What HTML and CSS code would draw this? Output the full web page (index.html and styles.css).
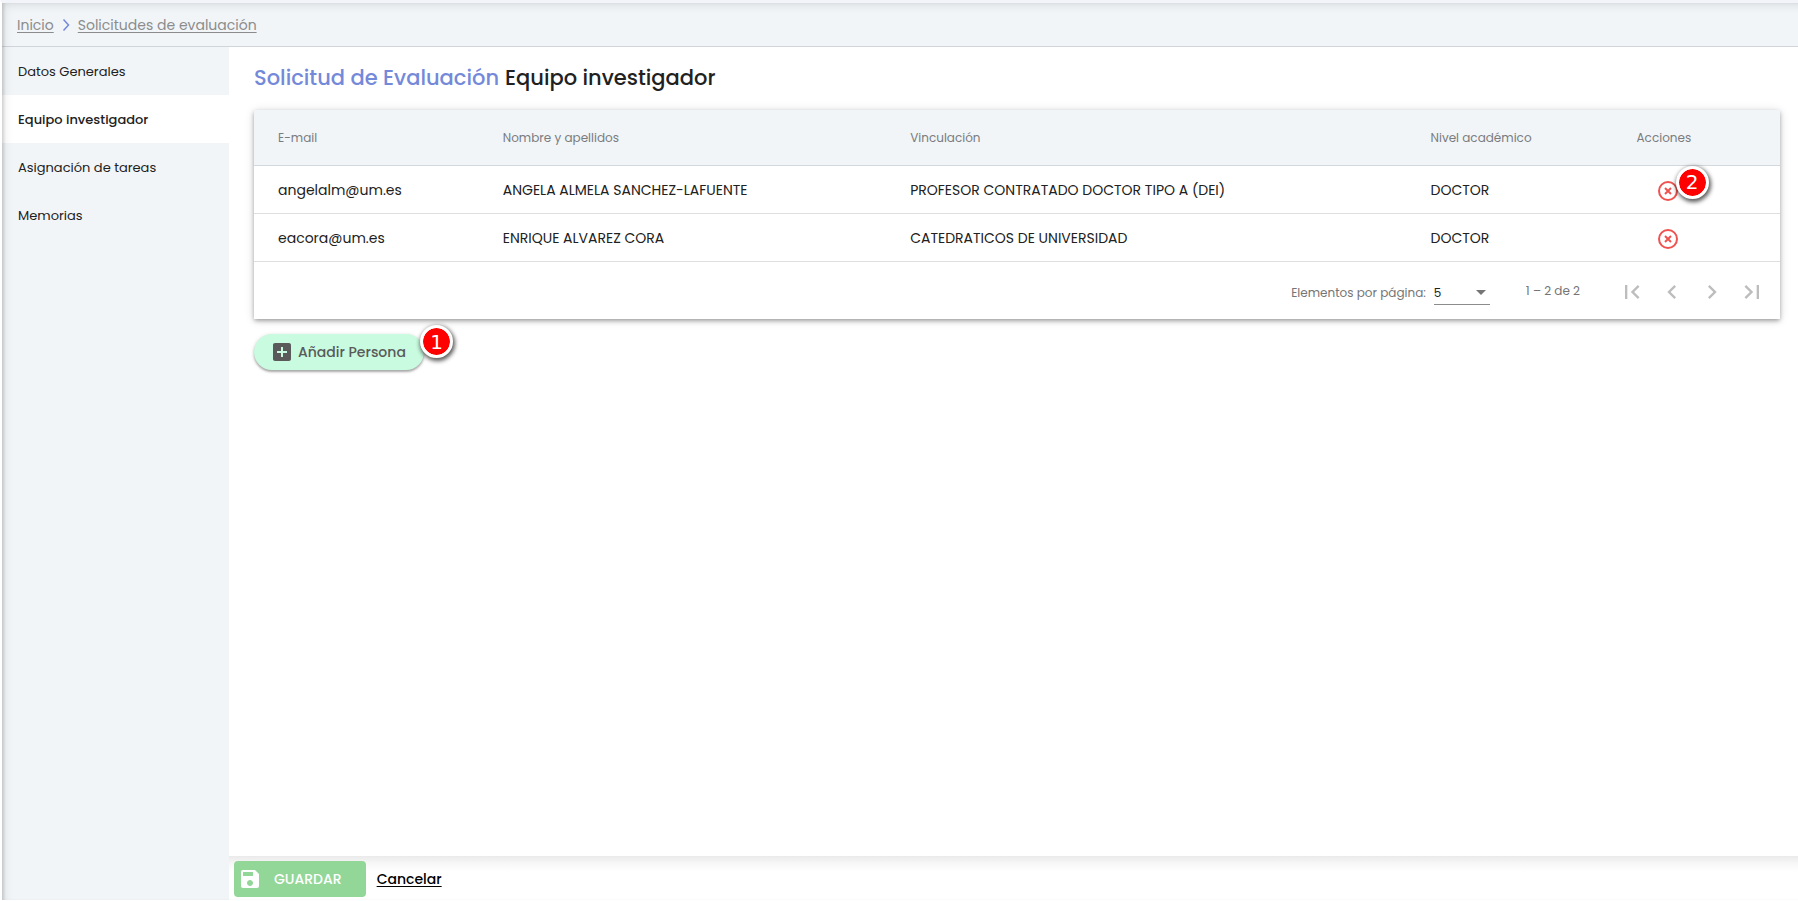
FILE: index.html
```html
<!DOCTYPE html>
<html lang="es">
<head>
<meta charset="utf-8">
<meta name="viewport" content="width=device-width, initial-scale=1">
<title>Solicitud de Evaluación - Equipo investigador</title>
<link rel="stylesheet" href="styles.css">
</head>
<body>
<div class="app">
  <nav class="breadcrumb" aria-label="Ruta">
    <a href="#">Inicio</a>
    <svg class="breadcrumb-sep" viewBox="0 0 8 12" aria-hidden="true"><path d="M1.5 .5L6.5 6l-5 5.500"/></svg>
    <a href="#">Solicitudes de evaluación</a>
  </nav>
  <div class="body">
    <nav class="sidebar" aria-label="Secciones">
      <a href="#">Datos Generales</a>
      <a href="#" class="active" aria-current="page">Equipo investigador</a>
      <a href="#">Asignación de tareas</a>
      <a href="#">Memorias</a>
    </nav>
    <div class="content">
      <main class="main">
        <h1 class="title"><span class="title-section">Solicitud de Evaluación</span> <span>Equipo investigador</span></h1>
        <section class="card">
          <table class="table">
            <colgroup><col class="col-mail"><col class="col-name"><col class="col-link"><col class="col-level"><col></colgroup>
            <thead>
              <tr><th>E-mail</th><th>Nombre y apellidos</th><th>Vinculación</th><th>Nivel académico</th><th>Acciones</th></tr>
            </thead>
            <tbody>
              <tr>
                <td>angelalm@um.es</td><td>ANGELA ALMELA SANCHEZ-LAFUENTE</td><td>PROFESOR CONTRATADO DOCTOR TIPO A (DEI)</td><td>DOCTOR</td>
                <td><div class="anchor"><button class="remove" type="button" aria-label="Eliminar"><svg viewBox="0 0 24 24"><circle cx="12" cy="12" r="9"/><path d="M9 9l6 6M15 9l-6 6"/></svg></button><span class="badge badge-row">2</span></div></td>
              </tr>
              <tr>
                <td>eacora@um.es</td><td>ENRIQUE ALVAREZ CORA</td><td>CATEDRATICOS DE UNIVERSIDAD</td><td>DOCTOR</td>
                <td><div class="anchor"><button class="remove" type="button" aria-label="Eliminar"><svg viewBox="0 0 24 24"><circle cx="12" cy="12" r="9"/><path d="M9 9l6 6M15 9l-6 6"/></svg></button></div></td>
              </tr>
            </tbody>
          </table>
          <div class="paginator">
            <label for="page-size">Elementos por página:</label>
            <span class="select-wrap">
              <select id="page-size"><option>5</option><option>10</option><option>25</option></select>
              <svg viewBox="0 0 10 5" aria-hidden="true"><path d="M0 0h10L5 5z"/></svg>
            </span>
            <span class="range">1 – 2 de 2</span>
            <div class="pages">
              <button type="button" disabled aria-label="Primera página"><svg viewBox="0 0 24 24"><path d="M18.41 16.59L13.82 12l4.59-4.59L17 6l-6 6 6 6zM6 6h2v12H6z"/></svg></button>
              <button type="button" disabled aria-label="Página anterior"><svg viewBox="0 0 24 24"><path d="M15.41 7.41L14 6l-6 6 6 6 1.41-1.41L10.83 12z"/></svg></button>
              <button type="button" disabled aria-label="Página siguiente"><svg viewBox="0 0 24 24"><path d="M10 6L8.59 7.41 13.17 12l-4.58 4.59L10 18l6-6z"/></svg></button>
              <button type="button" disabled aria-label="Última página"><svg viewBox="0 0 24 24"><path d="M5.59 7.41L10.18 12l-4.59 4.59L7 18l6-6-6-6zM16 6h2v12h-2z"/></svg></button>
            </div>
          </div>
        </section>
        <div class="anchor add-row">
          <button class="add" type="button"><svg viewBox="3 3 18 18" aria-hidden="true"><path d="M19 3H5c-1.11 0-2 .9-2 2v14c0 1.1.89 2 2 2h14c1.1 0 2-.9 2-2V5c0-1.1-.9-2-2-2zm-2 10h-4v4h-2v-4H7v-2h4V7h2v4h4v2z"/></svg>Añadir Persona</button>
          <span class="badge badge-add">1</span>
        </div>
      </main>
      <footer class="actions">
        <button class="save" type="button" disabled><svg viewBox="3 3 18 18" aria-hidden="true"><path d="M17 3H5c-1.11 0-2 .9-2 2v14c0 1.1.89 2 2 2h14c1.1 0 2-.9 2-2V7l-4-4zm-5 16c-1.66 0-3-1.34-3-3s1.34-3 3-3 3 1.34 3 3-1.34 3-3 3zm3-10H5V5h10v4z"/></svg>GUARDAR</button>
        <a href="#" class="cancel">Cancelar</a>
      </footer>
    </div>
  </div>
</div>
</body>
</html>
```
FILE: styles.css
```css
* { box-sizing: border-box; }

body {
  margin: 0;
  background: #fff;
  color: #212121;
  font-family: Poppins, Inter, "Noto Sans", sans-serif;
  font-size: 14px;
}

button, select { font: inherit; color: inherit; }

.app {
  position: relative;
  display: flex;
  flex-direction: column;
  min-height: 100vh;
  border-top: 3px solid #f3f4f9;
  border-left: 2px solid #fff;
  border-bottom: 1px solid #fff;
}

.app::after {
  content: "";
  position: absolute;
  inset: 0;
  pointer-events: none;
  box-shadow: inset 3px 0 3px -1px rgba(0, 0, 0, .12), inset 6px 6px 12px -6px rgba(0, 0, 0, .14);
}

.breadcrumb {
  display: flex;
  align-items: center;
  gap: 8px;
  height: 44px;
  padding: 1px 15px 0;
  background: #f1f5f8;
  border-bottom: 1px solid #cfd5da;
  font-size: 14px;
}

.breadcrumb a {
  color: #8c8c8c;
  text-underline-offset: 2px;
}

.breadcrumb-sep {
  width: 8px;
  height: 12px;
  fill: none;
  stroke: #7489d9;
  stroke-width: 1.5;
}

.body {
  display: flex;
  flex: 1;
}

.sidebar {
  flex: 0 0 227px;
  background: #f1f5f8;
}

.sidebar a {
  display: flex;
  align-items: center;
  height: 48px;
  padding: 2px 16px 0;
  color: #212121;
  font-size: 13px;
  text-decoration: none;
}

.sidebar .active {
  background: #fff;
  font-weight: 500;
}

.content {
  display: flex;
  flex: 1;
  flex-direction: column;
  min-width: 0;
}

.main {
  flex: 1;
  padding: 15px 18px 0 25px;
}

.title {
  display: flex;
  gap: 6px;
  margin: 0 0 16px;
  font-size: 21px;
  font-weight: 500;
  line-height: 32px;
}

.title-section { color: #7489d9; }

.card {
  background: #fff;
  box-shadow: 0 2px 4px -1px rgba(0, 0, 0, .2), 0 2px 5px rgba(0, 0, 0, .2), 0 1px 10px rgba(0, 0, 0, .12);
}

.table {
  width: 100%;
  table-layout: fixed;
  border-collapse: separate;
  border-spacing: 0;
}

.col-mail { width: 16.3%; }
.col-name { width: 26.7%; }
.col-link { width: 34.1%; }
.col-level { width: 13.5%; }

.table th {
  height: 56px;
  padding: 0;
  background: #f1f5f8;
  border-bottom: 1px solid #d3d8dc;
  color: #7b7c7e;
  font-size: 12px;
  font-weight: 400;
  text-align: left;
}

.table td {
  height: 48px;
  padding: 2px 0 0;
  border-bottom: 1px solid #dedede;
  white-space: nowrap;
}

.table th:first-child,
.table td:first-child { padding-left: 24px; }

.anchor {
  position: relative;
  display: flex;
}

.remove {
  display: flex;
  align-items: center;
  justify-content: center;
  width: 62px;
  height: 36px;
  padding: 0;
  border: 0;
  background: none;
  cursor: pointer;
}

.remove svg {
  width: 24px;
  height: 24px;
  fill: none;
  stroke: #ef5350;
  stroke-width: 2;
}

.badge {
  position: absolute;
  display: flex;
  align-items: center;
  justify-content: center;
  width: 33px;
  height: 33px;
  border: 3px solid #fff;
  border-radius: 50%;
  background: #f00;
  background-clip: padding-box;
  box-shadow: 1px 2px 4px 1px rgba(0, 0, 0, .65);
  color: #fff;
  font: 20px/1 "DejaVu Sans", sans-serif;
}

.badge-row { left: 39px; top: -7px; }
.badge-add { left: 166px; top: -9px; }

.paginator {
  display: flex;
  align-items: center;
  justify-content: flex-end;
  height: 57px;
  padding: 3px 8px 0 0;
  color: #757575;
  font-size: 12px;
}

.select-wrap {
  position: relative;
  width: 56px;
  margin: 0 36px 0 8px;
  border-bottom: 1px solid #8c8c8c;
}

.select-wrap select {
  display: block;
  width: 100%;
  height: 24px;
  padding: 2px 0 0;
  border: 0;
  appearance: none;
  background: none;
  color: #212121;
}

.select-wrap svg {
  position: absolute;
  top: 10px;
  right: 4px;
  width: 10px;
  height: 5px;
  fill: #757575;
  pointer-events: none;
}

.paginator label { padding-top: 2px; }

.range {
  margin-right: 32px;
  padding-bottom: 2px;
}

.pages { display: flex; }

.pages button {
  display: flex;
  align-items: center;
  justify-content: center;
  width: 40px;
  height: 40px;
  padding: 0;
  border: 0;
  background: none;
}

.pages svg {
  width: 28px;
  height: 28px;
  fill: #bdbdbd;
}

.add-row { margin-top: 15px; }

.add {
  display: flex;
  align-items: center;
  gap: 7px;
  height: 36px;
  padding: 0 18px 0 19px;
  border: 0;
  border-radius: 18px;
  background: #c8fbdf;
  box-shadow: 0 2px 2px rgba(0, 0, 0, .25), 0 1px 4px rgba(0, 0, 0, .16);
  color: #5a5a5a;
  font-size: 14px;
  font-weight: 500;
  cursor: pointer;
}

.add svg, .save svg {
  width: 18px;
  height: 18px;
  fill: currentColor;
}

.actions {
  display: flex;
  align-items: center;
  gap: 11px;
  height: 44px;
  padding: 2px 5px 0;
  background: linear-gradient(#eaeaea, #f8f8f8 8px, #fff 16px);
}

.save {
  display: flex;
  align-items: center;
  gap: 15px;
  height: 36px;
  padding: 0 24px 0 7px;
  border: 0;
  border-radius: 4px;
  background: #92d698;
  color: #fff;
  font-size: 14px;
  font-weight: 500;
}

.cancel {
  color: #000;
  font-size: 14px;
  font-weight: 500;
  text-underline-offset: 2px;
}
```
